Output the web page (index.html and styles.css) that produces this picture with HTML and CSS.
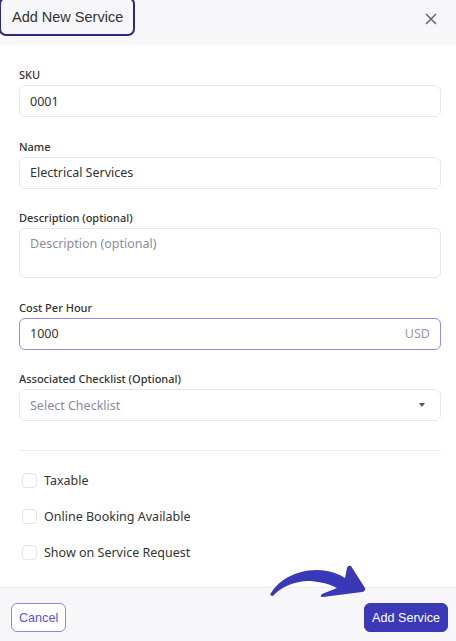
FILE: index.html
```html
<!DOCTYPE html>
<html>
  <head>
    <meta charset="UTF-8" />
    <title>Add New Service</title>
    <link rel="stylesheet" href="styles.css">
  </head>
  <body>
    <div class="modal">
      <div class="modal-header">
        <h2 class="modal-title">Add New Service</h2>
        <button class="close-btn" aria-label="Close">
          <svg width="12" height="12" viewBox="0 0 12 12">
            <path d="M1.5 1.5 L10.5 10.5 M10.5 1.5 L1.5 10.5" stroke="#6b6e7d" stroke-width="1.7" stroke-linecap="round" />
          </svg>
        </button>
      </div>

      <form class="modal-body">
        <div class="field">
          <label for="sku">SKU</label>
          <input id="sku" class="input" type="text" value="0001" />
        </div>
        <div class="field">
          <label for="name">Name</label>
          <input id="name" class="input" type="text" value="Electrical Services" />
        </div>
        <div class="field">
          <label for="desc">Description (optional)</label>
          <textarea id="desc" class="input textarea" placeholder="Description (optional)"></textarea>
        </div>
        <div class="field">
          <label for="cost">Cost Per Hour</label>
          <div class="input input-focus suffix-wrap">
            <input id="cost" type="text" value="1000" />
            <span class="suffix">USD</span>
          </div>
        </div>
        <div class="field">
          <label for="checklist">Associated Checklist (Optional)</label>
          <div class="input select">
            <span class="placeholder">Select Checklist</span>
            <span class="caret"></span>
          </div>
        </div>

        <hr class="divider" />

        <div class="checks">
          <label class="check"><span class="box"></span>Taxable</label>
          <label class="check"><span class="box"></span>Online Booking Available</label>
          <label class="check"><span class="box"></span>Show on Service Request</label>
        </div>
      </form>

      <div class="modal-footer">
        <button class="btn btn-outline">Cancel</button>
        <button class="btn btn-primary">Add Service</button>
        <!-- pointer arrow drawn over the footer -->
        <svg class="arrow" width="105" height="42" viewBox="0 0 105 42">
          <path d="M5 34 C12 20 30 9 52 9 C64 9 74 13 80 17 L82 7 Q83 4 86 5 L100 27 Q101 30 97 31 L58 36 Q54 36 57 33 L72 27 C62 22 52 20 42 20 C28 21 16 26 8 35 Z" fill="#3a38b6" />
        </svg>
      </div>
    </div>
  </body>
</html>
```

FILE: styles.css
```css
* {
  box-sizing: border-box;
}
body {
  margin: 0;
  font-family: "Noto Sans", Arial, sans-serif;
  background-color: #fff;
  color: #333;
}
.modal {
  width: 456px;
  height: 641px;
  display: flex;
  flex-direction: column;
  overflow: hidden;
}
.modal-header {
  height: 45px;
  background-color: #f7f7fa;
  display: flex;
  align-items: flex-start;
  justify-content: space-between;
}
.modal-title {
  margin: -3px 0 0 -1px;
  padding: 10px 10px 0 11px;
  height: 39px;
  font-family: "Liberation Sans", Arial, sans-serif;
  font-size: 14.5px;
  font-weight: normal;
  color: #333;
  border: 2px solid #2d2b7d;
  border-radius: 7px;
}
.close-btn {
  margin: 13px 19px 0 0;
  padding: 0;
  width: 12px;
  height: 12px;
  border: none;
  background: none;
  display: flex;
}
.modal-body {
  flex: 1;
  padding: 23px 15px 0 19px;
}
.field {
  margin-bottom: 22.7px;
}
.field label {
  display: block;
  font-size: 11px;
  font-weight: 500;
  line-height: 14px;
  margin-bottom: 3px;
  color: #333;
}
.input {
  display: flex;
  align-items: center;
  width: 100%;
  height: 32px;
  padding: 0 10px;
  border: 1px solid #e6e6eb;
  border-radius: 6px;
  font-family: "Noto Sans", Arial, sans-serif;
  font-size: 12.5px;
  color: #333;
  background: #fff;
  outline: none;
}
.textarea {
  display: block;
  height: 49.5px;
  padding: 6px 10px;
  resize: none;
}
.textarea::placeholder {
  color: #8b8c9b;
}
.input-focus {
  border-color: #8f8ae4;
}
.suffix-wrap input {
  flex: 1;
  border: none;
  padding: 0;
  font: inherit;
  color: #333;
  outline: none;
}
.suffix {
  color: #9a9aa4;
}
.select {
  justify-content: space-between;
}
.placeholder {
  color: #8b8c9b;
}
.caret {
  width: 0;
  height: 0;
  margin-right: 5px;
  border-left: 3.5px solid transparent;
  border-right: 3.5px solid transparent;
  border-top: 4px solid #555;
}
.divider {
  margin: 29px 0 0;
  border: none;
  border-top: 1px solid #ececf0;
}
.checks {
  display: flex;
  flex-direction: column;
  gap: 18px;
  padding-top: 20px;
}
.check {
  display: flex;
  align-items: center;
  gap: 7px;
  height: 18px;
  font-size: 12.5px;
  color: #333;
}
.box {
  width: 15px;
  height: 15px;
  margin-left: 3px;
  border: 1px solid #e3e3e8;
  border-radius: 4px;
}
.modal-footer {
  position: relative;
  height: 54px;
  flex-shrink: 0;
  background-color: #f7f7fa;
  border-top: 1px solid #ececf0;
  display: flex;
  justify-content: space-between;
  align-items: flex-start;
  padding: 15px 8px 0 11px;
}
.btn {
  height: 29px;
  padding: 0 7px;
  font-family: "Liberation Sans", Arial, sans-serif;
  font-size: 12.6px;
  border-radius: 6px;
  cursor: pointer;
}
.btn-outline {
  background: #fff;
  border: 1px solid #8d88e2;
  color: #5752d0;
}
.btn-primary {
  background-color: #3c39b8;
  border: 1px solid #3c39b8;
  color: #fff;
}
.arrow {
  position: absolute;
  left: 265px;
  top: -27px;
}
```
